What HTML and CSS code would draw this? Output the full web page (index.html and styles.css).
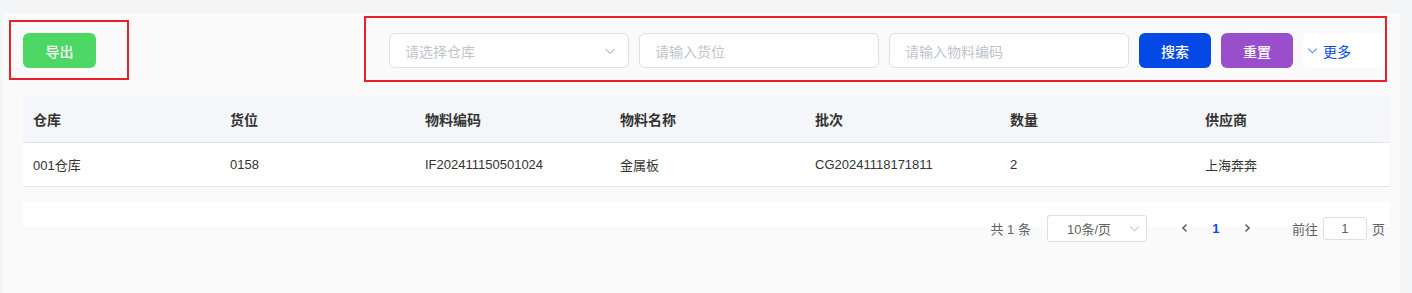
FILE: index.html
```html
<!DOCTYPE html>
<html lang="zh">
<head>
<meta charset="utf-8">
<title>库存</title>
<link rel="stylesheet" href="styles.css">
</head>
<body>
<div class="page">
  <div class="toolbar">
    <button class="btn btn-export">导出</button>
    <div class="filters">
      <div class="field field-select">
        <span class="ph">请选择仓库</span>
        <svg class="chev" width="12" height="12" viewBox="0 0 12 12"><path d="M1.5 4 L6 8.5 L10.5 4" fill="none" stroke="#c0c4cc" stroke-width="1.1"/></svg>
      </div>
      <div class="field"><span class="ph">请输入货位</span></div>
      <div class="field"><span class="ph">请输入物料编码</span></div>
      <button class="btn btn-search">搜索</button>
      <button class="btn btn-reset">重置</button>
      <button class="btn btn-more">
        <svg width="11" height="11" viewBox="0 0 12 12"><path d="M1.5 4 L6 8.5 L10.5 4" fill="none" stroke="#5b8def" stroke-width="1.2"/></svg>
        <span>更多</span>
      </button>
    </div>
  </div>

  <table class="grid">
    <colgroup>
      <col class="c-first"><col class="c"><col class="c"><col class="c"><col class="c"><col class="c"><col class="c">
    </colgroup>
    <thead>
      <tr><th>仓库</th><th>货位</th><th>物料编码</th><th>物料名称</th><th>批次</th><th>数量</th><th>供应商</th></tr>
    </thead>
    <tbody>
      <tr><td>001仓库</td><td>0158</td><td>IF202411150501024</td><td>金属板</td><td>CG20241118171811</td><td>2</td><td>上海奔奔</td></tr>
    </tbody>
  </table>

  <div class="pager-band">
    <div class="pager">
      <span class="total">共 1 条</span>
      <div class="sizes">
        <span>10条/页</span>
        <svg class="chev-s" width="11" height="11" viewBox="0 0 12 12"><path d="M1.5 4 L6 8.5 L10.5 4" fill="none" stroke="#c0c4cc" stroke-width="1.1"/></svg>
      </div>
      <span class="nav">
        <svg width="10" height="10" viewBox="0 0 10 10"><path d="M6.5 1.5 L3 5 L6.5 8.5" fill="none" stroke="#606266" stroke-width="1.6"/></svg>
      </span>
      <span class="num">1</span>
      <span class="nav">
        <svg width="10" height="10" viewBox="0 0 10 10"><path d="M3.5 1.5 L7 5 L3.5 8.5" fill="none" stroke="#606266" stroke-width="1.6"/></svg>
      </span>
      <span class="jump">前往</span>
      <span class="jump-input">1</span>
      <span class="jump-tail">页</span>
    </div>
  </div>
</div>
<div class="annot annot-left"></div>
<div class="annot annot-right"></div>
</body>
</html>
```

FILE: styles.css
```css
* { box-sizing: border-box; }
html, body { margin: 0; padding: 0; }
body {
  background: #f4f5f7;
  font-family: "Liberation Sans", "Noto Sans CJK SC", sans-serif;
  color: #333;
  height: 293px;
  overflow: hidden;
  position: relative;
}
.page {
  margin: 13px 12px 0 3px;
  background: #fafafa;
  height: 280px;
  padding: 20px 10px 0 20px;
}
.toolbar {
  display: flex;
  justify-content: space-between;
  align-items: center;
  height: 35px;
  padding-right: 5px;
}
.btn {
  height: 35px;
  border: none;
  border-radius: 6px;
  color: #fff;
  font-family: inherit;
  font-size: 14px;
  font-weight: 500;
  padding: 0;
  cursor: pointer;
}
.btn-export { width: 73px; background: #4dd865; }
.filters { display: flex; gap: 10px; align-items: center; }
.field {
  width: 240px;
  height: 35px;
  border: 1px solid #dcdfe6;
  border-radius: 6px;
  background: #fff;
  display: flex;
  align-items: center;
  padding: 0 15px;
  font-size: 14px;
}
.field-select { justify-content: space-between; padding-right: 12px; }
.ph { color: #c0c4cc; }
.btn-search { width: 72px; background: #0449e6; }
.btn-reset { width: 72px; background: #994fcc; }
.btn-more {
  width: 82px;
  background: #fff;
  color: #0a4be6;
  font-weight: 400;
  display: flex;
  align-items: center;
  padding-left: 4px;
  gap: 5px;
}

.grid {
  margin-top: 29px;
  width: 1367px;
  border-collapse: collapse;
  table-layout: fixed;
  font-size: 13px;
}
.c-first { width: 197px; }
.c { width: 195px; }
.grid th {
  height: 45px;
  background: #f5f6f9;
  text-align: left;
  font-weight: 700;
  font-size: 14px;
  color: #333;
  padding: 0 10px;
  border-bottom: 1px solid #e1e6ee;
}
.grid td {
  height: 44px;
  background: #fff;
  padding: 0 10px;
  color: #333;
  border-bottom: 1px solid #e1e6ee;
}

.pager-band {
  margin-top: 15px;
  width: 1367px;
  height: 25px;
  background: #fff;
}
.pager {
  display: flex;
  justify-content: flex-end;
  align-items: center;
  padding-top: 13px;
  padding-right: 5px;
  height: 40px;
  font-size: 13px;
  color: #606266;
}
.total { margin-right: 16px; }
.sizes {
  width: 100px;
  height: 27px;
  border: 1px solid #dcdfe6;
  border-radius: 3px;
  background: #fff;
  display: flex;
  align-items: center;
  justify-content: space-between;
  padding: 0 6px 0 19px;
  color: #606266;
}
.nav {
  width: 30px;
  height: 27px;
  display: flex;
  align-items: center;
  justify-content: center;
}
.sizes + .nav { margin-left: 23px; }
.num {
  width: 32px;
  text-align: center;
  color: #0a4be6;
  font-weight: 700;
}
.jump { margin-left: 30px; }
.jump-input {
  width: 44px;
  height: 23px;
  margin: 0 5px;
  border: 1px solid #dcdfe6;
  border-radius: 3px;
  background: #fff;
  display: flex;
  align-items: center;
  justify-content: center;
}

.annot {
  position: absolute;
  border: 2px solid #e8202a;
  pointer-events: none;
}
.annot-left { left: 9px; top: 20px; width: 120px; height: 60px; }
.annot-right { left: 364px; top: 16px; width: 1023px; height: 66px; }
```
